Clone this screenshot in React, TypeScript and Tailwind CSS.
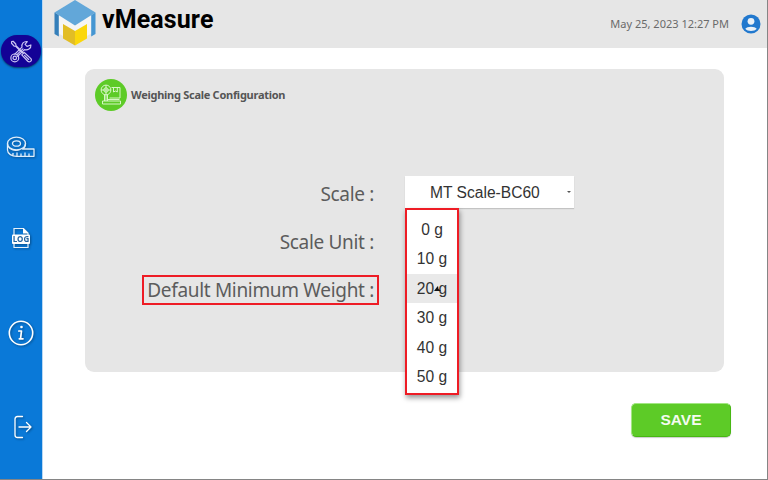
import type { ReactNode } from "react";
import clsx from "clsx";

const weights = ["0 g", "10 g", "20 g", "30 g", "40 g", "50 g"];

function Logo() {
  return (
    <svg viewBox="0 0 42 46" className="w-[42px] h-[46px] shrink-0">
      <path d="M4 14 21 24 38 14V33L33 36V27L21 33 9 27V36L4 33Z" fill="#f5f5f5" />
      <path d="M0.500 12.500 4.800 15V36.500L0.500 34Z" fill="#347fba" />
      <path d="M41.500 12.500 37.200 15V36.500L41.500 34Z" fill="#4596d2" />
      <path d="M21 0 41.500 12.500 21 25.500 0.500 12.500Z" fill="#62a7d9" />
      <path d="M9 24 21 31V45.500L9 38.500Z" fill="#e2bd25" />
      <path d="M33 24 21 31V45.500L33 38.500Z" fill="#fbd70b" />
    </svg>
  );
}

function ToolsIcon() {
  return (
    <svg viewBox="0 0 24 24" className="w-[23px] h-[23px]" fill="none" stroke="#cbc5f3" strokeWidth="1.250" strokeLinejoin="round" strokeLinecap="round">
      <path d="M12.500 7.400 5 14.700M12.500 7.400C11.800 4 14.300 1.200 18 1.600L15.700 4.500 17.800 6.700 21.800 5.200C22.200 8.800 18.500 11 15.200 10L7.900 17M13.500 9.200 7 15.500" />
      <circle cx="5" cy="18.700" r="4.100" />
      <circle cx="5" cy="18.700" r="1.800" />
      <path d="M1.700 1.600 3.300 1.300 6 4.200 6.300 6 14 13.800M1.700 1.600 1.600 3.400 4.300 6.300 6 6.500 12.200 12.800M12.300 15.600 14.900 13 21.800 19.500C23.300 21.500 20.600 24 18.500 22.200L12.300 15.600ZM15.200 16 19.500 20.300" />
    </svg>
  );
}

function TapeIcon() {
  return (
    <svg viewBox="0 0 30 22" className="w-[30px] h-[22px]" fill="none" stroke="#e0eefb" strokeWidth="1.300" strokeLinejoin="round">
      <ellipse cx="10.500" cy="7.500" rx="9" ry="6.300" />
      <ellipse cx="10.500" cy="7.500" rx="4" ry="2.700" />
      <path d="M1.500 7.500V14C1.500 18 6 20.300 10.500 20.300H28V13H16.500C18.500 12 19.500 10 19.500 7.500M2 10C4 14 9 15.500 14 13.500M7 19.500V17M11 20V16.500M15 20V17.500M19 20V16.500M23 20V17.500" />
    </svg>
  );
}

function LogIcon() {
  return (
    <svg viewBox="0 0 20 22" className="w-5 h-[22px]">
      <path d="M3 8V1.500H12.500L17 6V8M3 17V20.500H17V17" fill="none" stroke="#e6f1fb" strokeWidth="1.200" />
      <path d="M12 1V6.500H17.500Z" fill="#fff" />
      <rect x="1" y="7.500" width="18" height="9.500" rx="1" fill="#fff" />
      <text x="10" y="15.200" textAnchor="middle" fontSize="8" fontWeight="700" fontFamily="Noto Sans, sans-serif" fill="#24649f">LOG</text>
    </svg>
  );
}

function InfoIcon() {
  return (
    <svg viewBox="0 0 26 26" className="w-[26px] h-[26px]" fill="none" stroke="#fff" strokeLinecap="round" strokeLinejoin="round">
      <circle cx="13" cy="13" r="11.700" strokeWidth="1.600" />
      <circle cx="13.500" cy="7" r="1.300" fill="#fff" stroke="none" />
      <path d="M10.800 11H13.500L12.500 18.800M11.300 18.800H15" strokeWidth="1.700" />
    </svg>
  );
}

function LogoutIcon() {
  return (
    <svg viewBox="0 0 20 24" className="w-5 h-6" fill="none" stroke="#fff" strokeWidth="1.300" strokeLinecap="round" strokeLinejoin="round">
      <path d="M9.500 1.500H4.500Q2 1.500 2 4V20Q2 22.500 4.500 22.500H9.500M6 12H18M13.500 7.500 18 12 13.500 16.500" />
    </svg>
  );
}

function ScaleIcon() {
  return (
    <svg viewBox="0 0 22 22" className="w-[22px] h-[22px]" fill="none" stroke="#dcf8cd" strokeWidth="0.950">
      <circle cx="6" cy="6" r="4.900" />
      <circle cx="6" cy="6" r="2.200" />
      <path d="M6 1V11M1 6H11M4.500 10.500V17M6 10.500V17M7.500 10.500V17M2.500 17H20.500V20H2.500ZM7.500 15.500H19.500M11.500 3.500H20V14H9.500M13.500 3.500V8L15.500 7 17.300 8V3.500" />
    </svg>
  );
}

function Label({ children, marked }: { children: ReactNode; marked?: boolean }) {
  return (
    <div
      className={clsx(
        "w-[237px] h-[30px] border-2 pr-[3px] flex items-center justify-end whitespace-nowrap text-[19px] tracking-[-0.32px] leading-none text-[#5c5c5c]",
        marked ? "border-[#ee1c25]" : "border-transparent"
      )}
    >
      {children}
    </div>
  );
}

export default function App() {
  return (
    <div className="flex w-[768px] h-[480px] overflow-hidden bg-white border-r border-b border-[#858585] font-['Noto_Sans',sans-serif]">
      {/* Sidebar */}
      <nav className="w-[43px] shrink-0 bg-[#0a79d8] border-r border-[#b9d7f2] flex flex-col items-center">
        <div className="mt-[35px] w-[40px] h-8 rounded-[16px] bg-[#130296] shadow-[0_1px_2px_rgba(0,0,0,0.55)] flex items-center justify-center">
          <ToolsIcon />
        </div>
        <div className="mt-[69px] drop-shadow-[1px_1px_1px_rgba(0,0,0,0.35)]"><TapeIcon /></div>
        <div className="mt-[69px] drop-shadow-[1px_1px_1px_rgba(0,0,0,0.35)]"><LogIcon /></div>
        <div className="mt-[71px] drop-shadow-[1px_1px_1px_rgba(0,0,0,0.35)]"><InfoIcon /></div>
        <div className="mt-[69px] ml-[3px] drop-shadow-[1px_1px_1px_rgba(0,0,0,0.35)]"><LogoutIcon /></div>
      </nav>

      <div className="flex-1 flex flex-col">
        {/* Header */}
        <header className="h-12 shrink-0 bg-[#e6e6e6] flex items-start pl-[11px] pr-[6px]">
          <Logo />
          <h1 className="ml-[6px] mt-[6px] font-['Roboto',sans-serif] font-bold text-[25px] tracking-[0.1px] leading-7 text-black">vMeasure</h1>
          <span className="ml-auto mt-[16px] text-[11px] leading-4 text-[#6a6a6a] whitespace-nowrap">May 25, 2023 12:27 PM</span>
          <svg viewBox="0 0 20 20" className="ml-[12px] mt-[14px] w-5 h-5">
            <circle cx="10" cy="10" r="9.500" fill="#2178ce" />
            <circle cx="10" cy="7.300" r="3.400" fill="#e9f0f7" />
            <path d="M4.300 14.800C6 11.900 14 11.900 15.700 14.800 13.500 17.700 6.500 17.700 4.300 14.800Z" fill="#e9f0f7" />
          </svg>
        </header>

        {/* Configuration card */}
        <main className="mt-[21px] ml-[42px] w-[639px] h-[303px] rounded-[9px] bg-[#e6e6e6] flex flex-col">
          <div className="flex items-center pt-[10px] pl-[10px] gap-1">
            <div className="w-8 h-8 rounded-full bg-[#5dcb27] flex items-center justify-center">
              <ScaleIcon />
            </div>
            <h2 className="mt-px text-[11px] font-bold tracking-[-0.27px] text-[#555] whitespace-nowrap">Weighing Scale Configuration</h2>
          </div>

          <div className="mt-[65px] ml-[57px] flex items-start gap-[26px]">
            <div className="flex flex-col gap-[18px] mt-[3px]">
              <Label>Scale :</Label>
              <Label>Scale Unit :</Label>
              <Label marked>Default Minimum Weight :</Label>
            </div>
            <div className="relative font-['Liberation_Sans',sans-serif] text-[15.6px] text-[#333]">
              <div className="w-[169px] h-8 bg-white shadow-[0_1px_1px_rgba(0,0,0,0.15)] flex items-center justify-between pl-[25px] pr-[3px]">
                <span className="pt-px">MT Scale-BC60</span>
                <span className="w-0 h-0 border-x-[2px] border-t-[2px] border-x-transparent border-t-[#555]" />
              </div>
              <ul className="absolute left-0 top-[32px] w-[54px] h-[187px] bg-white border-2 border-[#ee1c25] shadow-[1px_3px_5px_rgba(0,0,0,0.4)] flex flex-col pt-[5px]">
                {weights.map((w) => (
                  <li key={w} className={clsx("relative h-[29.4px] flex items-center justify-center", w === "20 g" && "bg-[#e9e9e9]")}>
                    {w}
                    {/* Pointer tip resting on the hovered option */}
                    {w === "20 g" && (
                      <svg viewBox="0 0 7 6" className="absolute left-[27px] top-[12px] w-[7px] h-[6px]">
                        <path d="M0 5 3 1 4 0 4.500 3 7 5Z" fill="#111" />
                      </svg>
                    )}
                  </li>
                ))}
              </ul>
            </div>
          </div>
        </main>

        <button className="mt-[31px] ml-[588px] w-[100px] h-[34px] rounded-[5px] bg-[#5dcb27] border border-t-[#a2e782] border-l-[#a2e782] border-r-[#47b713] border-b-[#47b713] shadow-[0_1px_1px_rgba(0,0,0,0.2)] font-['Liberation_Sans',sans-serif] font-bold text-[15.5px] text-[#f4fbf0]">
          SAVE
        </button>
      </div>
    </div>
  );
}
